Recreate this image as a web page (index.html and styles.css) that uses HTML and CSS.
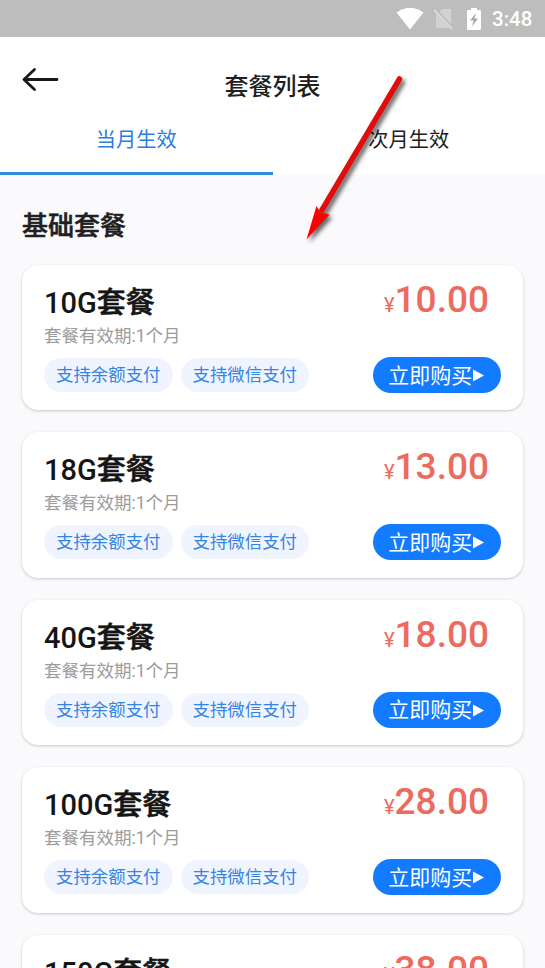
FILE: index.html
```html
<!DOCTYPE html>
<html lang="zh-CN">
<head>
<meta charset="utf-8">
<title>套餐列表</title>
<link rel="stylesheet" href="styles.css">
</head>
<body>
<div class="status">
  <svg width="28" height="22" viewBox="0 0 28 22"><path d="M0.5 4.5Q14 -5 27.500 4.500L14 21.500Z" fill="#fff"/></svg>
  <svg class="sim" width="20" height="22" viewBox="0 0 20 22"><path d="M8 1H17V20H2V7Z" fill="#d2d2d2"/><path d="M1 2L19 21" stroke="#bdbdbd" stroke-width="4"/><path d="M0 2L18 21" stroke="#dadada" stroke-width="2"/></svg>
  <svg class="battery" width="14" height="22" viewBox="0 0 14 22"><path d="M4 0H10V2H13Q14 2 14 3V21Q14 22 13 22H1Q0 22 0 21V3Q0 2 1 2H4Z" fill="#fff"/><path d="M9 5L3 12.500H6.500L5 18.500L11 10.500H7.500Z" fill="#aaa"/></svg>
  <span class="clock">3:48</span>
</div>
<header class="header">
  <svg class="back" width="38" height="26" viewBox="0 0 38 26"><path d="M35 13.500H2M12.500 3.500L2 13.500L12.500 23.500" fill="none" stroke="#181818" stroke-width="2.800" stroke-linecap="round" stroke-linejoin="round"/></svg>
  <h1 class="title">套餐列表</h1>
</header>
<nav class="tabs"><div class="tab active">当月生效</div><div class="tab">次月生效</div></nav>
<main class="content">
  <h2 class="section">基础套餐</h2>
  <div class="list" id="list"></div>
</main>
<svg class="pointer" width="120" height="190" viewBox="0 0 120 190"><g class="arrow"><path d="M99.500 18L22 149" stroke="#e20c0c" stroke-width="5.500" stroke-linecap="round"/><path d="M6.500 178.500L16.500 145L20.500 151.500L29.500 153.500Z" fill="#f00"/></g></svg>
<template id="card">
  <article class="card">
    <div class="top"><div><h3 class="name"><span class="size"></span><span class="word">套餐</span></h3><p class="valid">套餐有效期:1个月</p></div><div class="price"><span class="yen">¥</span><span class="amount"></span></div></div>
    <div class="bottom"><span class="tag">支持余额支付</span><span class="tag">支持微信支付</span><button class="buy">立即购买<svg width="11" height="13" viewBox="0 0 11 13"><path d="M0 .5L11 6.500L0 12.500Z" fill="#fff"/></svg></button></div>
  </article>
</template>
<script src="script.js"></script>
</body>
</html>
```
FILE: styles.css
```css
* { box-sizing: border-box; }
body { margin: 0; width: 545px; height: 968px; overflow: hidden; position: relative; background: #fafafc; color: #202020; font-family: Roboto, "Noto Sans CJK SC", sans-serif; }
h1, h2, h3, p { margin: 0; }
svg { display: block; flex: none; }
.status { height: 37px; background: #bdbdbd; display: flex; align-items: center; padding: 0 12px 0 396px; }
.sim { margin-left: 10px; }
.battery { margin-left: 13px; }
.clock { margin-left: 11px; color: #fff; font-size: 20.5px; font-weight: 500; line-height: 37px; padding-top: 2px; }
.header { height: 74px; background: #fff; display: grid; grid-template-columns: 64px 1fr 64px; }
.back { margin: 29px 0 0 22px; }
.title { text-align: center; font-size: 24px; font-weight: 500; line-height: 36px; padding-top: 32px; }
.tabs { height: 64px; display: flex; background: #fff; }
.tab { flex: 1; text-align: center; font-size: 20.2px; line-height: 30px; padding-top: 14px; color: #202020; border-bottom: 0 solid #2d8bdc; }
.tab.active { color: #2b7de0; border-bottom-width: 3px; }
.content { padding: 31px 22px 0; }
.section { font-size: 26px; line-height: 40px; font-weight: 500; -webkit-text-stroke: .5px #202020; }
.list { padding-top: 19px; display: flex; flex-direction: column; gap: 22px; }
.card { flex: none; height: 145.4px; background: #fff; border-radius: 16px; box-shadow: 0 1px 3px rgba(0,0,0,.2); padding: 18px 22px 0; }
.top { height: 74px; display: flex; justify-content: space-between; }
.name { font-size: 29px; font-weight: 500; line-height: 40px; color: #151515; }
.word { -webkit-text-stroke: .6px #151515; }
.valid { font-size: 17.5px; line-height: 26px; color: #9c9c9c; }
.price { display: flex; align-items: baseline; color: #ec6a5e; padding-right: 12px; height: 40px; line-height: 34px; }
.yen { font-size: 20px; }
.amount { font-size: 37px; font-weight: 500; }
.bottom { display: flex; gap: 8px; align-items: center; height: 36px; }
.tag { width: 128.500px; height: 34px; border-radius: 17px; background: #f0f4ff; color: #3384e5; font-size: 17.4px; line-height: 34px; text-align: center; }
.buy { margin-left: auto; width: 128.500px; height: 36px; border: 0; border-radius: 18px; background: #127bff; color: #fff; font: 400 21px/36px Roboto, "Noto Sans CJK SC", sans-serif; padding: 1px 1px 0 0; display: flex; align-items: center; justify-content: center; gap: 1px; }
.pointer { position: absolute; left: 300px; top: 61px; }
.arrow { filter: drop-shadow(3px 3px 2px rgba(0,0,0,.6)); }
```
FILE: script.js
```js
const plans = [["10G", "10.00"], ["18G", "13.00"], ["40G", "18.00"], ["100G", "28.00"], ["150G", "38.00"]];
const template = document.getElementById("card");
const list = document.getElementById("list");
for (const [size, price] of plans) {
  const card = template.content.cloneNode(true);
  card.querySelector(".size").textContent = size;
  card.querySelector(".amount").textContent = price;
  list.append(card);
}
```
